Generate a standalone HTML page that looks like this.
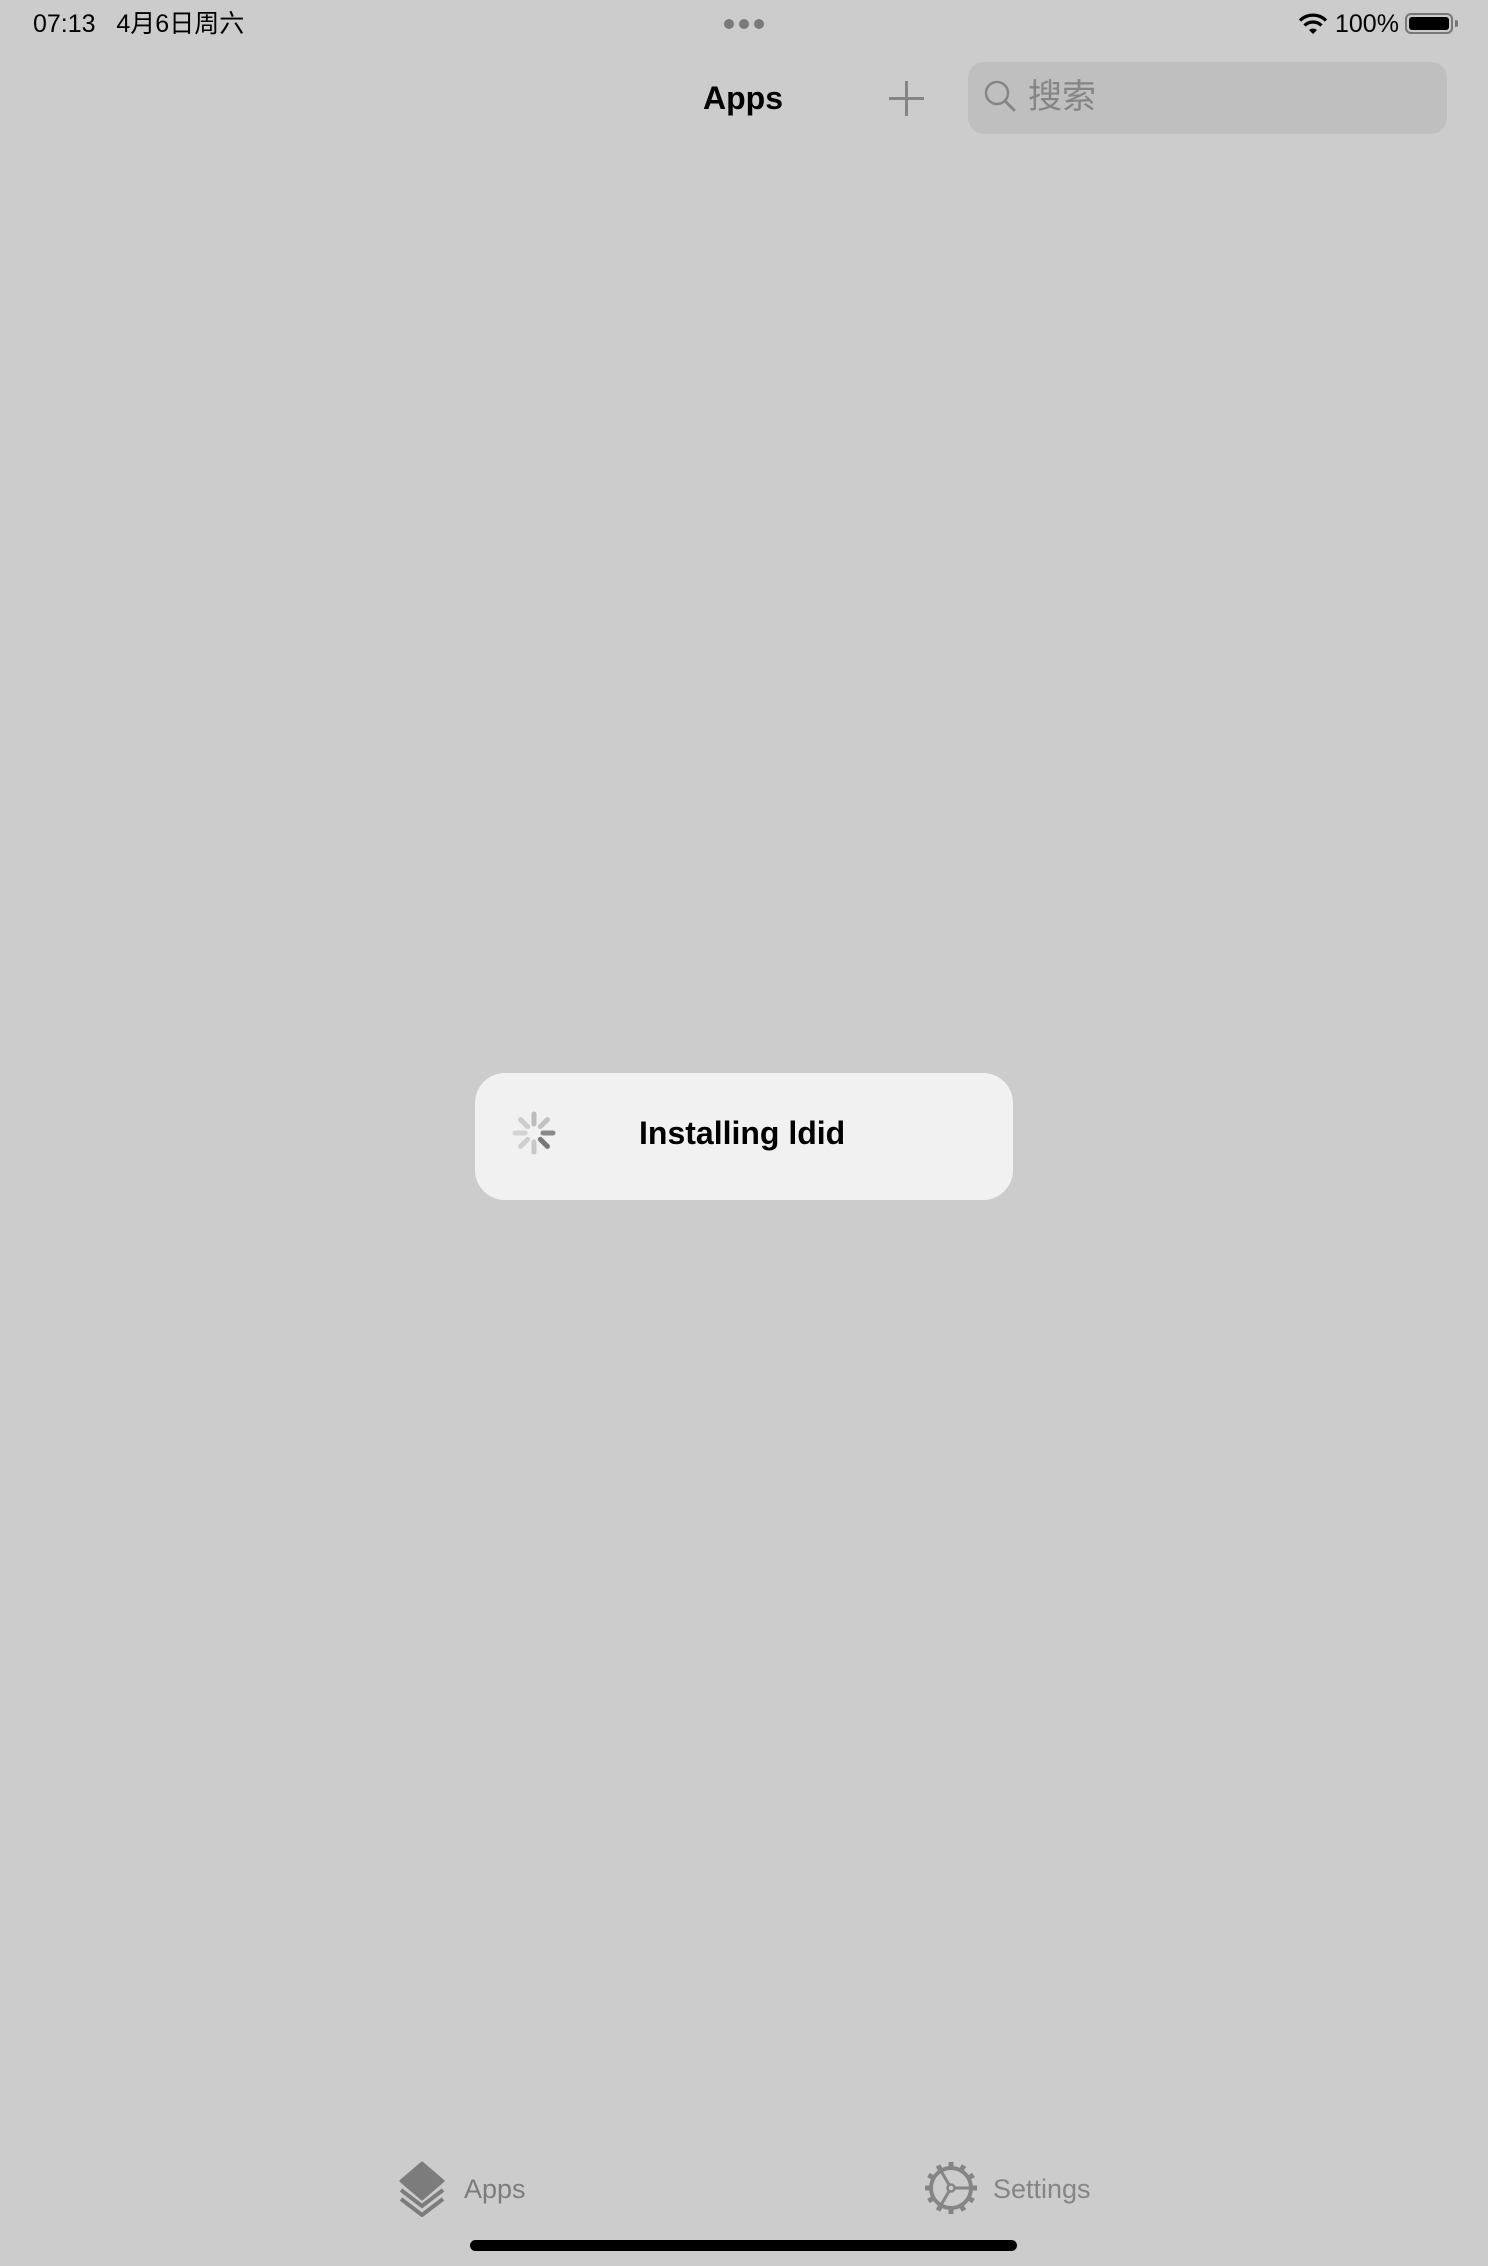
<!DOCTYPE html>
<html><head><meta charset="utf-8"><style>
*{margin:0;padding:0;box-sizing:border-box}
body{width:1488px;height:2266px;background:#cccccc;position:relative;overflow:hidden;font-family:"Liberation Sans","Noto Sans CJK SC",sans-serif;color:#000}
.a{position:absolute;white-space:nowrap}
</style></head><body>
<div class="a" style="left:33px;top:9px;font-size:25px;line-height:30px">07:13&nbsp;&nbsp;&nbsp;4月6日周六</div>
<div class="a" style="left:724px;top:19px;width:10px;height:10px;border-radius:5px;background:#7a7a7a"></div>
<div class="a" style="left:739px;top:19px;width:10px;height:10px;border-radius:5px;background:#7a7a7a"></div>
<div class="a" style="left:754px;top:19px;width:10px;height:10px;border-radius:5px;background:#7a7a7a"></div>
<svg class="a" style="left:1298px;top:13px" width="30" height="22" viewBox="0 0 30 22"><path d="M15 21 L11 17 A6 6 0 0 1 19 17 Z" fill="#000"/><path d="M6.5 12.5 A12 12 0 0 1 23.5 12.5" stroke="#000" stroke-width="3.2" fill="none"/><path d="M2 7.5 A18.5 18.5 0 0 1 28 7.5" stroke="#000" stroke-width="3.2" fill="none"/></svg>
<div class="a" style="left:1335px;top:9px;font-size:25px;line-height:30px">100%</div>
<div class="a" style="left:1405px;top:13px;width:48px;height:21px;border:2px solid #777;border-radius:6px;padding:2px"><div style="width:100%;height:100%;background:#000;border-radius:3px"></div></div>
<div class="a" style="left:1455px;top:20px;width:3px;height:7px;background:#777;border-radius:0 2px 2px 0"></div>

<div class="a" style="left:703px;top:78px;font-size:32px;font-weight:bold;line-height:40px">Apps</div>
<div class="a" style="left:889px;top:97px;width:35px;height:3px;background:#858585"></div>
<div class="a" style="left:905px;top:81px;width:3px;height:35px;background:#858585"></div>
<div class="a" style="left:968px;top:62px;width:479px;height:72px;background:#bfbfbf;border-radius:16px"></div>
<svg class="a" style="left:983px;top:79px" width="36" height="36" viewBox="0 0 36 36"><circle cx="14" cy="14" r="11" stroke="#858585" stroke-width="2.5" fill="none"/><path d="M22 22 L31 31" stroke="#858585" stroke-width="3" stroke-linecap="round"/></svg>
<div class="a" style="left:1028px;top:76px;font-size:34px;line-height:42px;color:#858585">搜索</div>

<div class="a" style="left:475px;top:1073px;width:538px;height:127px;background:#f1f1f1;border-radius:30px"></div>
<svg class="a" style="left:510px;top:1109px" width="48" height="48" viewBox="-24 -24 48 48">
<g stroke-width="5" stroke-linecap="round">
<line x1="0" y1="-9" x2="0" y2="-19" stroke="#bdbdbd" transform="rotate(0)"/>
<line x1="0" y1="-9" x2="0" y2="-19" stroke="#c2c2c2" transform="rotate(45)"/>
<line x1="0" y1="-9" x2="0" y2="-19" stroke="#8a8a8a" transform="rotate(90)"/>
<line x1="0" y1="-9" x2="0" y2="-19" stroke="#777" transform="rotate(135)"/>
<line x1="0" y1="-9" x2="0" y2="-19" stroke="#c8c8c8" transform="rotate(180)"/>
<line x1="0" y1="-9" x2="0" y2="-19" stroke="#cfcfcf" transform="rotate(225)"/>
<line x1="0" y1="-9" x2="0" y2="-19" stroke="#d3d3d3" transform="rotate(270)"/>
<line x1="0" y1="-9" x2="0" y2="-19" stroke="#cccccc" transform="rotate(315)"/>
</g></svg>
<div class="a" style="left:639px;top:1113px;font-size:32px;font-weight:bold;line-height:40px">Installing ldid</div>

<svg class="a" style="left:397px;top:2161px" width="50" height="56" viewBox="0 0 50 56">
<path d="M25 2 L46 20 L25 38 L4 20 Z" fill="#7c7c7c" stroke="#7c7c7c" stroke-width="3" stroke-linejoin="round"/>
<path d="M4 29 L25 45 L46 29" stroke="#7c7c7c" stroke-width="4" fill="none"/>
<path d="M4 38 L25 54 L46 38" stroke="#7c7c7c" stroke-width="4" fill="none"/>
</svg>
<div class="a" style="left:464px;top:2173px;font-size:27px;line-height:32px;color:#7c7c7c">Apps</div>
<svg class="a" style="left:925px;top:2162px" width="52" height="52" viewBox="-26 -26 52 52">
<g fill="#858585"><rect x="-2.5" y="-26" width="5" height="7"/><rect x="-2.5" y="-26" width="5" height="7" transform="rotate(30)"/><rect x="-2.5" y="-26" width="5" height="7" transform="rotate(60)"/><rect x="-2.5" y="-26" width="5" height="7" transform="rotate(90)"/><rect x="-2.5" y="-26" width="5" height="7" transform="rotate(120)"/><rect x="-2.5" y="-26" width="5" height="7" transform="rotate(150)"/><rect x="-2.5" y="-26" width="5" height="7" transform="rotate(180)"/><rect x="-2.5" y="-26" width="5" height="7" transform="rotate(210)"/><rect x="-2.5" y="-26" width="5" height="7" transform="rotate(240)"/><rect x="-2.5" y="-26" width="5" height="7" transform="rotate(270)"/><rect x="-2.5" y="-26" width="5" height="7" transform="rotate(300)"/><rect x="-2.5" y="-26" width="5" height="7" transform="rotate(330)"/></g>
<circle r="20" stroke="#858585" stroke-width="4" fill="none"/>
<circle r="3.5" stroke="#858585" stroke-width="2.5" fill="none"/>
<path d="M3.5 0 L20 0 M-1.8 -3 L-10 -17 M-1.8 3 L-10 17" stroke="#858585" stroke-width="3"/>
</svg>
<div class="a" style="left:993px;top:2173px;font-size:27px;line-height:32px;color:#858585">Settings</div>
<div class="a" style="left:470px;top:2240px;width:547px;height:11px;background:#000;border-radius:6px"></div>
</body></html>
